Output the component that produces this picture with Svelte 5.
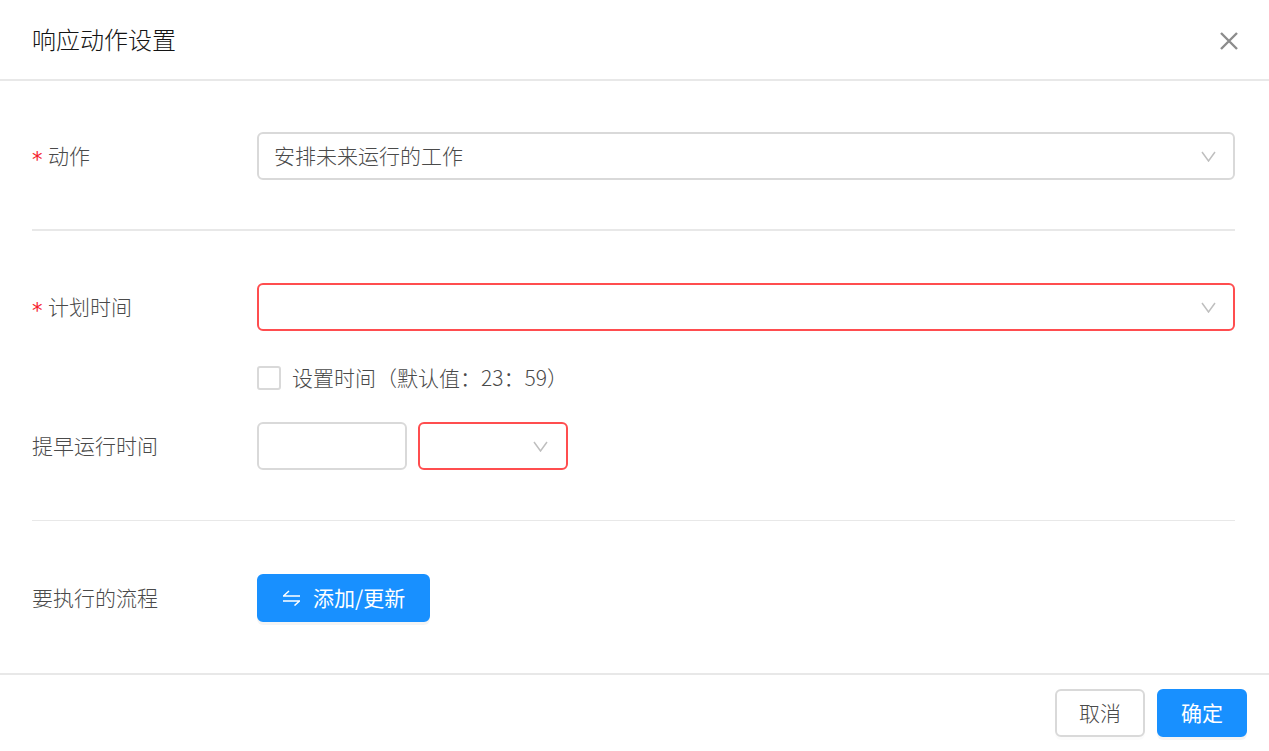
<script>
  const chevronPath = 'M1 1 L7.5 10 L14 1';
</script>

{#snippet chevron()}
  <svg class="chevron" width="15" height="11" viewBox="0 0 15 11" fill="none" aria-hidden="true">
    <path d={chevronPath} stroke="#bfbfbf" stroke-width="1.5" />
  </svg>
{/snippet}

<div class="dialog">
  <header class="head">
    <h1>响应动作设置</h1>
    <svg class="close" width="20" height="20" viewBox="0 0 20 20" fill="none" aria-label="关闭">
      <path d="M2 2 L18 18 M18 2 L2 18" stroke="#8c8c8c" stroke-width="2.4" />
    </svg>
  </header>

  <main class="body">
    <section class="sec first">
      <div class="row">
        <div class="label"><span class="req">*</span>动作</div>
        <div class="select wide"><span class="value">安排未来运行的工作</span>{@render chevron()}</div>
      </div>
    </section>

    <section class="sec second">
      <div class="row">
        <div class="label"><span class="req">*</span>计划时间</div>
        <div class="select wide error">{@render chevron()}</div>
      </div>
      <div class="row check-row">
        <div class="label"></div>
        <span class="box"></span>
        <span class="check-text">设置时间（默认值：23：59）</span>
      </div>
      <div class="row ahead">
        <div class="label">提早运行时间</div>
        <div class="num"></div>
        <div class="select unit error">{@render chevron()}</div>
      </div>
    </section>

    <section class="sec third">
      <div class="row">
        <div class="label">要执行的流程</div>
        <button class="btn primary add">
          <svg width="17" height="16" viewBox="0 0 17 16" fill="none" aria-hidden="true">
            <path d="M0 6 H17 M0.5 6 L6 1 M0 11 H17 M16.5 11 L11.5 15.5" stroke="#fff" stroke-width="1.5" />
          </svg>
          <span class="btn-text">添加/更新</span>
        </button>
      </div>
    </section>
  </main>

  <footer class="foot">
    <button class="btn"><span class="btn-text">取消</span></button>
    <button class="btn primary"><span class="btn-text">确定</span></button>
  </footer>
</div>

<style>
  :global(body) {
    margin: 0;
    background: #fff;
  }
  .dialog {
    font-family: "Noto Sans CJK SC", "Liberation Sans", sans-serif;
    font-size: 21px;
    font-weight: 300;
    color: #4a4a4a;
    width: 1269px;
    height: 751px;
    overflow: hidden;
  }
  .head {
    height: 79px;
    border-bottom: 2px solid #e8e8e8;
    padding: 0 30px 0 32px;
    display: flex;
    align-items: center;
    justify-content: space-between;
  }
  h1 {
    margin: 0 0 2px;
    font-size: 24px;
    font-weight: 300;
    color: #141414;
  }
  .close {
    margin-top: 3px;
  }
  .body {
    padding: 0 34px 0 32px;
    height: 592px;
  }
  .sec.first {
    padding: 51px 0 49px;
    border-bottom: 2px solid #e8e8e8;
  }
  .sec.second {
    padding: 52px 0 50px;
    border-bottom: 1px solid #e8e8e8;
  }
  .sec.third {
    padding-top: 53px;
  }
  .row {
    display: flex;
    align-items: center;
  }
  .label {
    width: 225px;
    padding-bottom: 2px;
    flex: none;
    white-space: nowrap;
  }
  .req {
    display: inline-block;
    width: 16px;
    color: #f5222d;
    font-family: "DejaVu Sans", sans-serif;
    font-size: 21px;
    font-weight: 400;
    line-height: 0;
    vertical-align: -3px;
  }
  .select, .num {
    box-sizing: border-box;
    height: 48px;
    border: 2px solid #d9d9d9;
    border-radius: 6px;
    display: flex;
    align-items: center;
    justify-content: space-between;
    padding: 0 17px 0 15px;
  }
  .value {
    padding-bottom: 2px;
  }
  .wide {
    flex: 1;
  }
  .error {
    border-color: #ff4d4f;
    justify-content: flex-end;
  }
  .chevron {
    flex: none;
    margin-top: 1px;
  }
  .check-row {
    margin-top: 35px;
    height: 24px;
  }
  .box {
    box-sizing: border-box;
    width: 24px;
    height: 24px;
    border: 2px solid #d9d9d9;
    border-radius: 3px;
    flex: none;
  }
  .check-text {
    margin-left: 11px;
    padding-bottom: 2px;
    white-space: nowrap;
  }
  .ahead {
    margin-top: 32px;
  }
  .num {
    width: 150px;
  }
  .unit {
    width: 150px;
    margin-left: 11px;
    padding-right: 18px;
  }
  .btn {
    font: inherit;
    box-sizing: border-box;
    height: 48px;
    padding: 0 22px;
    border: 2px solid #d9d9d9;
    border-radius: 6px;
    background: #fff;
    color: #4a4a4a;
    box-shadow: 0 3px 0 rgba(0, 0, 0, 0.015);
    display: inline-flex;
    align-items: center;
    white-space: nowrap;
  }
  .btn-text {
    padding-bottom: 2px;
  }
  .primary {
    background: #1890ff;
    border-color: #1890ff;
    color: #fff;
    font-weight: 400;
    box-shadow: 0 3px 0 rgba(0, 0, 0, 0.045);
  }
  .add {
    padding: 0 23px 0 24px;
    gap: 13px;
  }
  .foot {
    border-top: 2px solid #e8e8e8;
    height: 78px;
    box-sizing: border-box;
    padding: 14px 22px 0 0;
    display: flex;
    justify-content: flex-end;
    gap: 12px;
  }
</style>
